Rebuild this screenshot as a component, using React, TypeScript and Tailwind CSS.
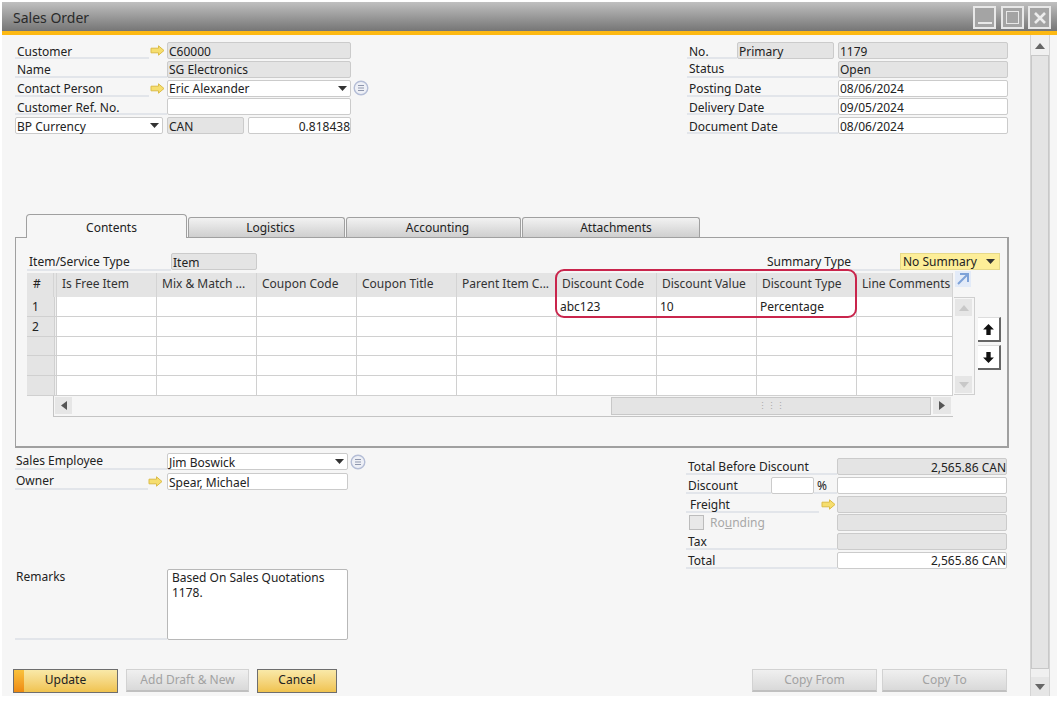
const font = "font-['Noto_Sans',sans-serif]"

function LinkArrow() {
  return (
    <svg width="15" height="11" viewBox="0 0 15 11" className="shrink-0">
      <path d="M1 3.2h7.5V.8L14 5.5l-5.5 4.7V7.8H1z" fill="#f6de6e" stroke="#dcbc46" strokeWidth="1" />
    </svg>
  )
}

function Caret() {
  return (
    <svg width="9" height="5" viewBox="0 0 9 5" className="shrink-0">
      <path d="M0 0h9L4.5 5z" fill="#333" />
    </svg>
  )
}

function ListIcon() {
  return (
    <svg width="16" height="16" viewBox="0 0 16 16" className="shrink-0">
      <circle cx="8" cy="8" r="6.8" fill="#eef0f6" stroke="#b4bdd6" strokeWidth="1.4" />
      <path d="M5 5.5h6M5 8h6M5 10.5h6" stroke="#8f97ad" strokeWidth="1" />
    </svg>
  )
}

function Field({
  value = "",
  gray = false,
  right = false,
  caret = false,
  className = "",
}: {
  value?: string
  gray?: boolean
  right?: boolean
  caret?: boolean
  className?: string
}) {
  return (
    <div
      className={`flex items-center h-[17px] rounded-[2px] border border-[#cbcbcb] pl-px text-[12px] leading-none text-[#222] ${
        gray ? "bg-[#e4e4e4]" : "bg-white"
      } ${right ? "justify-end pr-0" : "justify-between pr-[3px]"} ${className}`}
    >
      <span className="pt-[2px] whitespace-nowrap">{value}</span>
      {caret && <Caret />}
    </div>
  )
}

function Label({ text, className = "" }: { text: string; className?: string }) {
  return (
    <div className={`flex items-center h-[17px] border-b-2 border-[#e2e5ea] pl-[2px] pt-[4px] text-[12px] leading-none text-[#222] whitespace-nowrap ${className}`}>
      {text}
    </div>
  )
}

function Tab({ text, active = false, className = "" }: { text: string; active?: boolean; className?: string }) {
  return active ? (
    <div className={`flex items-center justify-center h-[24px] -mb-px pt-[2px] pl-[10px] relative z-10 rounded-t-[4px] border border-b-0 border-[#a0a0a0] bg-[#f6f6f6] text-[12px] text-[#222] ${className}`}>
      {text}
    </div>
  ) : (
    <div className={`flex items-center justify-center h-[20px] pl-[8px] rounded-t-[3px] border border-b-0 border-[#a0a0a0] bg-gradient-to-b from-[#f2f2f2] to-[#cfcfcf] text-[12px] text-[#222] ${className}`}>
      {text}
    </div>
  )
}

const columns = [
  "Is Free Item",
  "Mix & Match ...",
  "Coupon Code",
  "Coupon Title",
  "Parent Item C...",
  "Discount Code",
  "Discount Value",
  "Discount Type",
  "Line Comments",
]

const rows = [
  ["", "", "", "", "", "abc123", "10", "Percentage", ""],
  ["", "", "", "", "", "", "", "", ""],
  ["", "", "", "", "", "", "", "", ""],
  ["", "", "", "", "", "", "", "", ""],
  ["", "", "", "", "", "", "", "", ""],
]

function Grid() {
  return (
    <div className="relative grid w-[926px] grid-cols-[27px_3px_repeat(8,100px)_96px] text-[12px] leading-none text-[#222]">
      <div className="flex h-[24px] items-center pl-[6px] pb-[2px] bg-[#e4e4e4] border-r border-[#d4d4d4]">#</div>
      <div className="bg-[#e4e4e4] border-r border-[#d4d4d4]" />
      {columns.map((c) => (
        <div key={c} className="flex h-[24px] items-center pl-[5px] pb-[2px] bg-[#e4e4e4] border-r border-[#d4d4d4] whitespace-nowrap text-[#333]">
          {c}
        </div>
      ))}
      {rows.map((r, i) => (
        <div key={i} className="contents">
          <div className="flex h-[19.8px] items-center pl-[5px] pt-[2px] bg-[#e4e4e4] border-b border-[#d0d0d0]">
            {i < 2 ? i + 1 : ""}
          </div>
          <div className="bg-[#f0f0f0] border-x border-b border-[#d0d0d0]" />
          {r.map((v, j) => (
            <div key={j} className="flex h-[19.8px] items-center pl-[3px] pt-[2px] bg-white border-r border-b border-[#d0d0d0] whitespace-nowrap">
              {v}
            </div>
          ))}
        </div>
      ))}
      {/* highlight around the discount columns */}
      <div className="absolute left-[528px] top-[-4px] w-[302px] h-[49px] rounded-[9px] border-2 border-[#c9254c]" />
    </div>
  )
}

function MoveButton({ up }: { up: boolean }) {
  return (
    <div className="flex items-center justify-center w-[23px] h-[25px] bg-white border-r-2 border-b-2 border-[#666] border-t border-t-[#ddd]">
      <svg width="13" height="13" viewBox="0 0 12 12">
        <path d={up ? "M6 1l5 5H8v5H4V6H1z" : "M6 11L1 6h3V1h4v5h3z"} fill="#111" />
      </svg>
    </div>
  )
}

function ActionButton({
  text,
  disabled = false,
  accent = false,
  className = "",
}: {
  text: string
  disabled?: boolean
  accent?: boolean
  className?: string
}) {
  if (disabled) {
    return (
      <div className={`flex items-center justify-center h-[23px] border border-[#d2d2d2] border-b-2 border-b-[#c0c0c0] bg-gradient-to-b from-[#f0f0f0] to-[#d9d9d9] text-[12px] text-[#a2a2a2] ${className}`}>
        {text}
      </div>
    )
  }
  return (
    <div className={`flex items-center h-[24px] border border-[#6e6e6e] bg-gradient-to-b from-[#f9e9a8] to-[#f0c34e] text-[12px] text-[#222] ${className}`}>
      {accent && <div className="w-[10px] h-full bg-gradient-to-b from-[#f9c23c] to-[#ee8a10]" />}
      <span className={`flex-1 pb-[2px] text-center ${accent ? "pr-[10px]" : ""}`}>{text}</span>
    </div>
  )
}

export default function App() {
  return (
    <div className={`w-[1057px] h-[701px] overflow-hidden bg-white pt-[2px] pl-[2px] ${font}`}>
      <div className="w-[1055px] h-[694px] flex flex-col bg-[#f6f6f6]">
        {/* title bar */}
        <div className="flex items-center justify-between h-[29px] shrink-0 pl-[11px] pr-[6px] bg-gradient-to-b from-[#c0c0c0] to-[#767676]">
          <span className="pt-[2px] text-[14px] text-[#2a2a2a]">Sales Order</span>
          <div className="flex gap-[4.5px] pt-[2px]">
            <div className="flex items-end justify-center w-[23px] h-[23px] pb-[3px] border-2 border-[#e8e8e8] bg-[#a4a4a4]">
              <div className="w-[14px] h-[2px] bg-[#e8e8e8]" />
            </div>
            <div className="flex items-center justify-center w-[23px] h-[23px] border-2 border-[#e8e8e8] bg-[#a4a4a4]">
              <div className="w-[13px] h-[13px] border border-[#e8e8e8]" />
            </div>
            <div className="flex items-center justify-center w-[23px] h-[23px] border-2 border-[#e8e8e8] bg-[#a4a4a4]">
              <svg width="12" height="12" viewBox="0 0 12 12">
                <path d="M1 1l10 10M11 1L1 11" stroke="#ececec" strokeWidth="2.6" />
              </svg>
            </div>
          </div>
        </div>
        <div className="h-[4px] shrink-0 bg-[#fdb913]" />

        <div className="flex flex-1 min-h-0">
          <div className="w-[1028px] pl-[13px] pt-[7px]">
            {/* header fields */}
            <div className="flex h-[172px]">
              <div className="w-[672px] flex flex-col gap-[1.8px]">
                <div className="flex items-center w-[336px]">
                  <Label text="Customer" className="w-[134px]" />
                  <div className="w-[18px] flex justify-end pr-[2px]"><LinkArrow /></div>
                  <Field value="C60000" gray className="w-[184px]" />
                </div>
                <div className="flex items-center w-[336px]">
                  <Label text="Name" className="w-[152px]" />
                  <Field value="SG Electronics" gray className="w-[184px]" />
                </div>
                <div className="flex items-center">
                  <Label text="Contact Person" className="w-[134px]" />
                  <div className="w-[18px] flex justify-end pr-[2px]"><LinkArrow /></div>
                  <Field value="Eric Alexander" caret className="w-[184px]" />
                  <div className="ml-[2px]"><ListIcon /></div>
                </div>
                <div className="flex items-center w-[336px]">
                  <Label text="Customer Ref. No." className="w-[152px]" />
                  <Field className="w-[184px]" />
                </div>
                <div className="flex items-center w-[336px]">
                  <Field value="BP Currency" caret className="w-[148px] mr-[4px]" />
                  <Field value="CAN" gray className="w-[77px] mr-[4px]" />
                  <Field value="0.818438" right className="w-[103px]" />
                </div>
              </div>
              <div className="w-[321px] flex flex-col gap-[1.8px]">
                <div className="flex items-center">
                  <Label text="No." className="w-[50px]" />
                  <Field value="Primary" gray className="w-[97px] mr-[4px]" />
                  <Field value="1179" gray className="w-[170px]" />
                </div>
                <div className="flex items-center">
                  <Label text="Status" className="w-[151px] pt-[2px]!" />
                  <Field value="Open" gray className="w-[170px]" />
                </div>
                <div className="flex items-center">
                  <Label text="Posting Date" className="w-[151px]" />
                  <Field value="08/06/2024" className="w-[170px]" />
                </div>
                <div className="flex items-center">
                  <Label text="Delivery Date" className="w-[151px]" />
                  <Field value="09/05/2024" className="w-[170px]" />
                </div>
                <div className="flex items-center">
                  <Label text="Document Date" className="w-[151px]" />
                  <Field value="08/06/2024" className="w-[170px]" />
                </div>
              </div>
            </div>

            {/* tabs */}
            <div className="flex items-end gap-px ml-[11px]">
              <Tab text="Contents" active className="w-[161px]" />
              <Tab text="Logistics" className="w-[157px]" />
              <Tab text="Accounting" className="w-[175px]" />
              <Tab text="Attachments" className="w-[178px] pl-[10px]" />
            </div>
            <div className="w-[994px] h-[211px] border border-[#a0a0a0] border-r-2 border-b-2 pl-[11px] pt-[14px]">
              <div className="flex items-center w-[973px] h-[19px]">
                <Label text="Item/Service Type" className="w-[144px] h-[19px] pt-[2px]!" />
                <Field value="Item" gray className="w-[86px] mr-[510px]" />
                <Label text="Summary Type" className="w-[133px] h-[19px] pl-0! pt-[2px]!" />
                <div className="flex items-center justify-between w-[100px] h-[17px] pl-[2px] pr-[4px] border border-[#e6d98a] bg-[#fdee98] text-[12px] text-[#222]">
                  <span className="pt-px">No Summary</span>
                  <Caret />
                </div>
              </div>
              <div className="flex mt-[2px]">
                <div className="flex flex-col">
                  <Grid />
                  {/* horizontal scrollbar */}
                  <div className="flex items-center ml-[26px] w-[900px] h-[21px] border-b border-l border-[#c4c4c4] pl-[1px] pr-[2px]">
                    <div className="flex items-center justify-center w-[17px] h-[17px] bg-[#e6e6e6]">
                      <svg width="6" height="9" viewBox="0 0 6 9"><path d="M6 0v9L0 4.5z" fill="#555" /></svg>
                    </div>
                    <div className="flex-1" />
                    <div className="flex items-center justify-center w-[320px] h-[18px] border border-[#c8c8c8] bg-[#e4e4e4] text-[9px] leading-none text-[#aaa]">⋮⋮⋮</div>
                    <div className="flex items-center justify-center w-[18px] h-[17px] ml-[2px] bg-[#e6e6e6]">
                      <svg width="6" height="9" viewBox="0 0 6 9"><path d="M0 0v9l6-4.5z" fill="#555" /></svg>
                    </div>
                  </div>
                </div>
                <div className="flex flex-col ml-px">
                  <svg width="16" height="16" viewBox="0 0 16 16" className="ml-px -mt-[2px]">
                    <rect width="16" height="16" fill="#e3ebf8" />
                    <path d="M3 13L12.5 3.5M5 3h8v8" fill="none" stroke="#7ea2d8" strokeWidth="2" />
                  </svg>
                  <div className="flex flex-col justify-between w-[21px] h-[98px] mt-[10px] border border-l-0 border-[#cfcfcf] py-px pl-px">
                    <div className="flex items-center justify-center w-[17px] h-[17px] bg-[#e6e6e6]">
                      <svg width="10" height="6" viewBox="0 0 10 6"><path d="M0 6h10L5 0z" fill="#c8c8c8" /></svg>
                    </div>
                    <div className="flex items-center justify-center w-[17px] h-[17px] bg-[#e6e6e6]">
                      <svg width="10" height="6" viewBox="0 0 10 6"><path d="M0 0h10L5 6z" fill="#c8c8c8" /></svg>
                    </div>
                  </div>
                </div>
                <div className="flex flex-col gap-[3px] ml-[3px] mt-[44px]">
                  <MoveButton up />
                  <MoveButton up={false} />
                </div>
              </div>
            </div>

            {/* lower fields */}
            <div className="flex mt-[5px] h-[216px]">
              <div className="w-[671px] flex flex-col">
                <div className="flex items-center">
                  <Label text="Sales Employee" className="w-[152px] pl-px pt-0!" />
                  <Field value="Jim Boswick" caret className="w-[181px]" />
                  <div className="ml-[2px]"><ListIcon /></div>
                </div>
                <div className="flex items-center w-[333px] mt-[3px]">
                  <Label text="Owner" className="w-[133px] pl-px pt-0!" />
                  <div className="w-[19px] flex justify-end pr-[4px]"><LinkArrow /></div>
                  <Field value="Spear, Michael" className="w-[181px]" />
                </div>
                <div className="flex w-[333px] mt-[79px]">
                  <div className="w-[152px] h-[71px] border-b-2 border-[#e2e5ea] pl-px text-[12px] leading-[16px] text-[#222]">Remarks</div>
                  <div className="w-[181px] h-[71px] rounded-[2px] border border-[#b8b8b8] bg-white pl-[4px] text-[12px] leading-[15px] text-[#222]">
                    <p>Based On Sales Quotations</p>
                    <p>1178.</p>
                  </div>
                </div>
              </div>
              <div className="w-[321px] flex flex-col gap-[1.8px] pt-[5px]">
                <div className="flex items-center">
                  <Label text="Total Before Discount" className="w-[151px] pt-[2px]!" />
                  <Field value="2,565.86 CAN" gray right className="w-[170px]" />
                </div>
                <div className="flex items-center">
                  <Label text="Discount" className="w-[85px]" />
                  <Field className="w-[43px]" />
                  <Label text="%" className="w-[23px] pl-[3px]" />
                  <Field className="w-[170px]" />
                </div>
                <div className="flex items-center">
                  <Label text="Freight" className="w-[133px] pl-[4px]" />
                  <div className="w-[18px] flex justify-end pr-[1px]"><LinkArrow /></div>
                  <Field gray className="w-[170px]" />
                </div>
                <div className="flex items-center">
                  <div className="flex items-center w-[151px] h-[17px] pl-[3px] text-[12px] text-[#a8a8a8]">
                    <div className="w-[15px] h-[15px] mr-[6px] border border-[#bcbcbc] bg-[#e8e8e8]" />
                    <span className="pt-px">Ro<span className="underline">u</span>nding</span>
                  </div>
                  <Field gray className="w-[170px]" />
                </div>
                <div className="flex items-center">
                  <Label text="Tax" className="w-[151px] pt-[2px]!" />
                  <Field gray className="w-[170px]" />
                </div>
                <div className="flex items-center">
                  <Label text="Total" className="w-[151px]" />
                  <Field value="2,565.86 CAN" right className="w-[170px]" />
                </div>
              </div>
            </div>

            {/* bottom buttons */}
            <div className="flex -ml-[2px]">
              <ActionButton text="Update" accent className="w-[105px] mr-[8px]" />
              <ActionButton text="Add Draft & New" disabled className="w-[123px] mr-[8px]" />
              <ActionButton text="Cancel" className="w-[80px] mr-[415px]" />
              <ActionButton text="Copy From" disabled className="w-[125px] mr-[5px]" />
              <ActionButton text="Copy To" disabled className="w-[125px]" />
            </div>
          </div>

          {/* right scrollbar */}
          <div className="flex flex-col w-[20px] h-full border-x border-[#d4d4d4] bg-[#f0f0f0] pt-px">
            <div className="flex items-center justify-center h-[19px] shrink-0">
              <svg width="10" height="6" viewBox="0 0 10 6"><path d="M0 6h10L5 0z" fill="#666" /></svg>
            </div>
            <div className="flex-1 border border-[#c8c8c8] bg-[#e4e4e4]" />
            <div className="h-[8px] shrink-0" />
            <div className="flex items-center justify-center h-[19px] shrink-0 bg-[#e6e6e6]">
              <svg width="10" height="6" viewBox="0 0 10 6"><path d="M0 0h10L5 6z" fill="#666" /></svg>
            </div>
          </div>
        </div>
      </div>
    </div>
  )
}
